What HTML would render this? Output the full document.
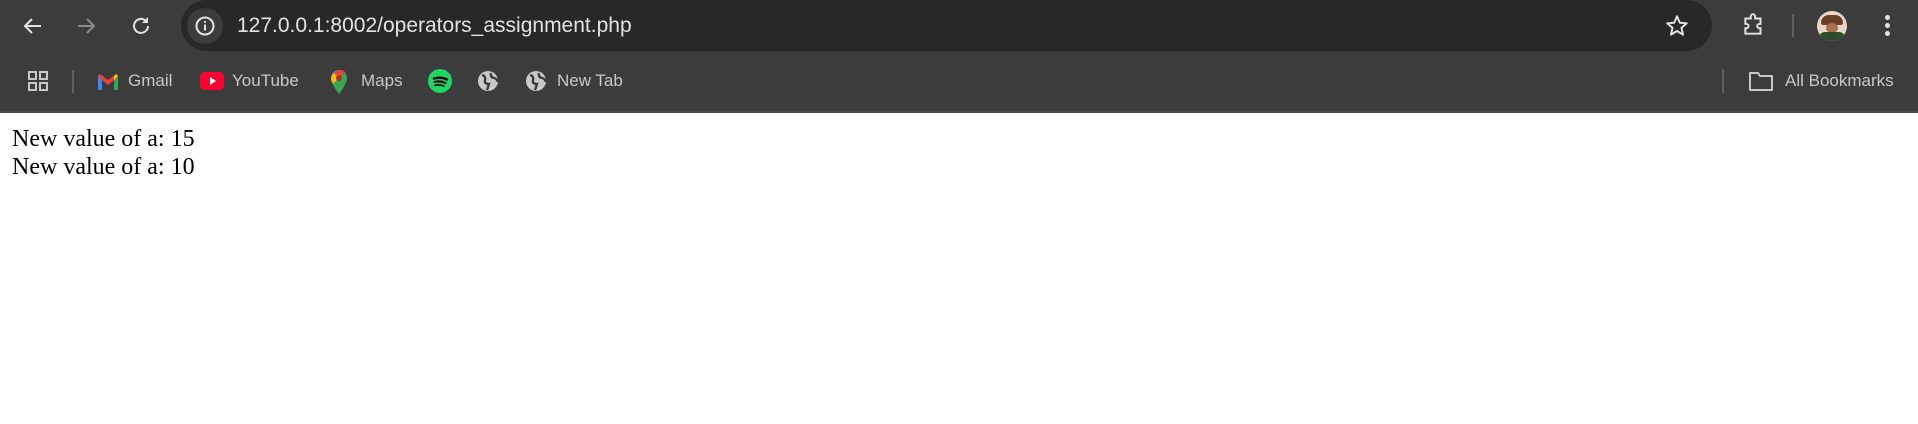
<!DOCTYPE html>
<html><head><meta charset="utf-8"><style>
*{margin:0;padding:0;box-sizing:border-box}
body{width:1918px;height:424px;background:#fff;position:relative;overflow:hidden;font-family:"Liberation Sans",sans-serif}
#top{position:absolute;left:0;top:0;width:1918px;height:113px;background:#3c3c3c;border-bottom:2px solid #4a4a4a}
.ab{position:absolute;left:181px;top:0;width:1531px;height:51px;background:#282828;border-radius:26px}
.i{position:absolute}
.url{position:absolute;left:237px;top:14px;font-size:21px;color:#e3e3e3;letter-spacing:0}
.bm{position:absolute;top:71px;font-size:17px;color:#c8c8c8}
.sep{position:absolute;width:2px;background:#5f5f5f}
.txt{position:absolute;left:12px;top:125px;font-family:"Liberation Serif",serif;font-size:24px;line-height:28px;color:#000}
</style></head><body>
<div id="top">
<div class="ab"></div>
<svg class="i" style="left:21px;top:14px" width="24" height="24" viewBox="0 0 24 24"><path d="M20 12H5M11 5l-7 7 7 7" fill="none" stroke="#e3e3e3" stroke-width="2"/></svg>
<svg class="i" style="left:74px;top:14px" width="24" height="24" viewBox="0 0 24 24"><path d="M4 12h15M13 5l7 7-7 7" fill="none" stroke="#8a8a8a" stroke-width="2"/></svg>
<svg class="i" style="left:129px;top:14px" width="24" height="24" viewBox="0 0 24 24"><path d="M19 12a7 7 0 1 1-2-5" fill="none" stroke="#e3e3e3" stroke-width="2"/><path d="M19 3v6h-6z" fill="#e3e3e3"/></svg>
<div class="i" style="left:187px;top:8px;width:36px;height:36px;border-radius:50%;background:#3c3c3c"></div>
<svg class="i" style="left:193px;top:14px" width="24" height="24" viewBox="0 0 24 24"><circle cx="12" cy="12" r="8.5" fill="none" stroke="#e3e3e3" stroke-width="2"/><path d="M12 10.5v6M12 7v1.8" stroke="#e3e3e3" stroke-width="2"/></svg>
<div class="url">127.0.0.1:8002/operators_assignment.php</div>
<svg class="i" style="left:1664px;top:13px" width="26" height="26" viewBox="0 0 24 24"><path d="M12 3l2.6 6 6.4.5-4.9 4.2 1.5 6.3L12 16.6 6.4 20l1.5-6.3L3 9.5 9.4 9z" fill="none" stroke="#e3e3e3" stroke-width="1.8" stroke-linejoin="round"/></svg>
<svg class="i" style="left:1741px;top:12px" width="26" height="26" viewBox="0 0 24 24"><path d="M4 6h5V4a2 2 0 0 1 4 0v2h5v5h-1a2 2 0 0 0 0 4h1v5H4v-5h1a2 2 0 0 0 0-4H4z" fill="none" stroke="#e3e3e3" stroke-width="1.8"/></svg>
<div class="sep" style="left:1792px;top:14px;height:23px"></div>
<div class="i" style="left:1817px;top:11px;width:30px;height:30px;border-radius:50%;background:#e8d6c4;overflow:hidden"><div style="position:absolute;left:4px;top:4px;width:22px;height:10px;border-radius:11px 11px 3px 3px;background:#6b3f2a"></div><div style="position:absolute;left:9px;top:12px;width:12px;height:10px;border-radius:50%;background:#a86f4c"></div><div style="position:absolute;left:2px;top:21px;width:26px;height:12px;background:#2f4a2a;border-radius:6px 6px 0 0"></div></div>
<div class="i" style="left:1885px;top:15px;width:5px;height:5px;border-radius:50%;background:#e3e3e3;box-shadow:0 8px 0 #e3e3e3,0 16px 0 #e3e3e3"></div>
<svg class="i" style="left:27px;top:70px" width="22" height="22" viewBox="0 0 22 22"><g fill="none" stroke="#c8c8c8" stroke-width="2"><rect x="2" y="2" width="7" height="7"/><rect x="13" y="2" width="7" height="7"/><rect x="2" y="13" width="7" height="7"/><rect x="13" y="13" width="7" height="7"/></g></svg>
<div class="sep" style="left:72px;top:70px;height:23px"></div>
<svg class="i" style="left:97px;top:73px" width="22" height="17" viewBox="0 0 22 17"><path d="M1 3v14h4V7l6 5 6-5v10h4V3l-2-2-8 6-8-6z" fill="#ea4335"/><path d="M1 3v14h4V7z" fill="#4285f4"/><path d="M17 7v10h4V3z" fill="#34a853"/><path d="M19 1l2 2-4 4V3z" fill="#fbbc04"/></svg>
<div class="bm" style="left:128px">Gmail</div>
<div class="i" style="left:200px;top:72px;width:24px;height:18px;border-radius:5px;background:#ff0033"></div>
<svg class="i" style="left:200px;top:72px" width="24" height="18"><path d="M10 5l6 4-6 4z" fill="#fff"/></svg>
<div class="bm" style="left:232px">YouTube</div>
<svg class="i" style="left:330px;top:69px" width="18" height="26" viewBox="0 0 18 26"><path d="M9 1a8 8 0 0 0-8 8c0 6 8 16 8 16s8-10 8-16a8 8 0 0 0-8-8z" fill="#34a853"/><path d="M9 1a8 8 0 0 0-8 8c0 2 1 4 2 6L15 3a8 8 0 0 0-6-2z" fill="#4285f4"/><path d="M1 9c0 2 1 4 2 6l6-6-5-5a8 8 0 0 0-3 5z" fill="#fbbc04"/><path d="M4 4l5 5 6-6a8 8 0 0 0-11 1z" fill="#ea4335"/><circle cx="9" cy="9" r="3" fill="#a33"/></svg>
<div class="bm" style="left:361px">Maps</div>
<div class="i" style="left:428px;top:69px;width:24px;height:24px;border-radius:50%;background:#1ed760"></div>
<svg class="i" style="left:428px;top:69px" width="24" height="24"><g fill="none" stroke="#000" stroke-linecap="round"><path d="M6 9.5q7-2 13 1" stroke-width="2.4"/><path d="M6.5 13q6-1.5 11 1" stroke-width="2"/><path d="M7 16.3q5-1 9 .8" stroke-width="1.6"/></g></svg>
<svg class="i" style="left:477px;top:70px" width="22" height="22" viewBox="0 0 22 22"><circle cx="11" cy="11" r="10" fill="#c8c8c8"/><path d="M5 5q4 1 3 5t4 4l-2 6M14 3q-1 4 3 5t3 4" fill="none" stroke="#3c3c3c" stroke-width="2.4"/></svg>
<svg class="i" style="left:525px;top:70px" width="22" height="22" viewBox="0 0 22 22"><circle cx="11" cy="11" r="10" fill="#c8c8c8"/><path d="M5 5q4 1 3 5t4 4l-2 6M14 3q-1 4 3 5t3 4" fill="none" stroke="#3c3c3c" stroke-width="2.4"/></svg>
<div class="bm" style="left:557px">New Tab</div>
<div class="sep" style="left:1722px;top:69px;height:24px"></div>
<svg class="i" style="left:1748px;top:70px" width="26" height="22" viewBox="0 0 26 22"><path d="M2 3h8l2 3h12v14H2z" fill="none" stroke="#c8c8c8" stroke-width="2" stroke-linejoin="round"/></svg>
<div class="bm" style="left:1785px">All Bookmarks</div>
</div>
<div class="txt">New value of a: 15<br>New value of a: 10</div>
</body></html>
